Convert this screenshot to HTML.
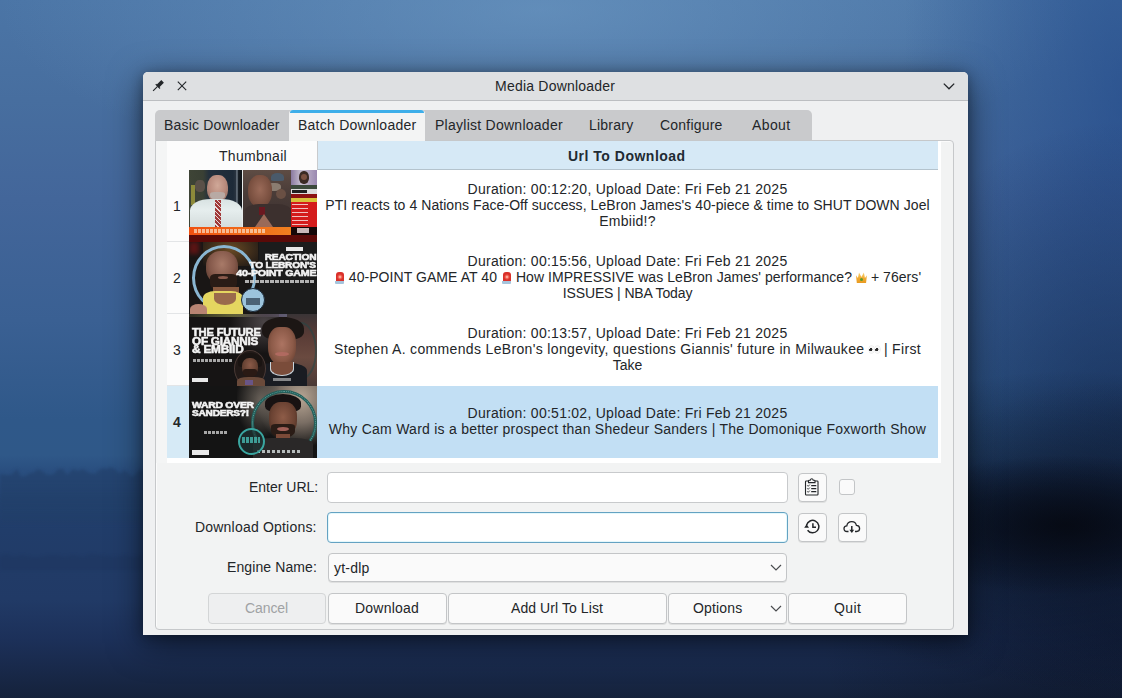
<!DOCTYPE html>
<html><head><meta charset="utf-8">
<style>
*{box-sizing:border-box;margin:0;padding:0}
html,body{width:1122px;height:698px;overflow:hidden}
body{position:relative;font-family:"Liberation Sans",sans-serif;color:#232629;
background:
 radial-gradient(ellipse 190px 70px at 1065px 525px, rgba(5,8,16,0.82), rgba(5,8,16,0) 100%),
 radial-gradient(ellipse 280px 160px at 1070px 530px, rgba(6,10,22,0.65), rgba(6,10,22,0) 100%),
 radial-gradient(ellipse 300px 260px at 1122px 640px, rgba(8,14,30,0.5), rgba(8,14,30,0) 100%),
 radial-gradient(ellipse 260px 300px at 1122px 420px, rgba(14,28,58,0.5), rgba(14,28,58,0) 100%),
 radial-gradient(ellipse 220px 600px at 1122px 100px, rgba(20,60,130,0.5), rgba(20,60,130,0) 100%),
 radial-gradient(ellipse 540px 170px at 540px 10px, rgba(120,165,205,0.5), rgba(120,165,205,0) 100%),
 linear-gradient(180deg,#4b75a6 0px,#476e9f 100px,#43669a 200px,#3a6093 320px,#2f5889 420px,#2f5888 455px,#2a4f80 470px,#23436f 500px,#213d6a 530px,#213b67 570px,#213a66 600px,#1c3059 640px,#15223b 698px);
}
.a{position:absolute}
.t{position:absolute;white-space:nowrap;font-size:14px;line-height:16px;letter-spacing:0.25px}
.c{text-align:center}
#win{position:absolute;left:143px;top:72px;width:825px;height:563px;background:#eff0f1;border-radius:5px 5px 0 0;
 box-shadow:0 8px 34px rgba(0,0,0,0.55),0 2px 12px rgba(0,0,0,0.3)}
#title{position:absolute;left:143px;top:72px;width:825px;height:29px;background:#dee0e2;border-bottom:1px solid #bcbec1;border-radius:5px 5px 0 0}
.tab{position:absolute;top:110px;height:31px;background:#c9cacc}
.pane{position:absolute;left:155px;top:140px;width:799px;height:490px;border:1px solid #c6c8ca;border-radius:0 4px 4px 4px;background:#f2f3f3;box-shadow:inset 1px 1px 0 #fbfbfb}
.cell{position:absolute;background:#fff}
.btn{position:absolute;background:#fafafa;border:1px solid #c3c5c7;border-radius:4px;box-shadow:0 1px 0 rgba(0,0,0,0.08)}
.inp{position:absolute;background:#fff;border:1px solid #c8cacc;border-radius:4px}
.em{display:inline-block;position:relative;width:11px;height:12px;vertical-align:-1px}
.siren::before{content:"";position:absolute;left:2px;top:1px;width:8px;height:9px;background:radial-gradient(circle 3px at 50% 55%,#ffd8cc 0,#f05a4a 60%,#d9302a 100%);border-radius:3px 3px 0 0}
.siren::after{content:"";position:absolute;left:1.5px;top:10px;width:9px;height:2.5px;background:#a6c4dc;border-radius:0 0 1px 1px}
.crown::before{content:"";position:absolute;left:0px;top:1px;width:11px;height:11px;background:linear-gradient(180deg,#f7d77a,#f0a830 60%,#e89a20);clip-path:polygon(0 30%,18% 55%,28% 5%,50% 45%,72% 5%,82% 55%,100% 30%,92% 100%,8% 100%)}
.crown::after{content:"";position:absolute;left:4px;top:7px;width:3px;height:3px;border-radius:50%;background:#5a9a30}
.eyes::before,.eyes::after{content:"";position:absolute;top:3px;width:5px;height:7px;border-radius:50%;background:radial-gradient(circle 1.7px at 38% 55%,#2a2a2a 0,#2a2a2a 90%,#f6f6f6 100%);box-shadow:0 0 0 0.5px #e2e2e2}
.eyes::before{left:0}.eyes::after{left:6px}
.th{position:absolute;width:128px;height:72px;overflow:hidden}
.tx{color:#f4f4f4;font-weight:bold;-webkit-text-stroke:0.55px #f4f4f4;white-space:nowrap;letter-spacing:-0.2px;transform-origin:0 0}
</style></head>
<body>
<svg class="a" style="left:0;top:0;filter:blur(1.5px);-webkit-mask-image:linear-gradient(180deg,#000 0,#000 478px,rgba(0,0,0,0.2) 525px,#000 545px)" width="320" height="698" viewBox="0 0 320 698">
 <path d="M0 525 L0 474 L5 475 L11 475 L17 469 L21 477 L26 476 L30 473 L33 473 L38 469 L42 471 L47 475 L51 475 L54 474 L58 469 L63 469 L67 475 L73 469 L78 471 L83 469 L89 473 L95 474 L99 470 L103 468 L106 469 L111 467 L116 470 L120 474 L124 470 L128 473 L132 477 L135 475 L140 469 L146 472 L150 469 L153 470 L159 471 L165 476 L170 472 L174 473 L180 470 L185 475 L191 469 L196 470 L200 474 L206 472 L212 473 L216 472 L219 470 L223 475 L229 470 L232 477 L237 472 L240 474 L246 473 L250 469 L256 469 L260 476 L264 475 L270 474 L275 470 L279 470 L285 471 L289 477 L295 477 L299 473 L304 473 L308 472 L312 472 L318 477 L320 525 Z" fill="#1e3a62" fill-opacity="0.45"/>
 <path d="M0 570 L0 556 L7 554 L13 557 L22 555 L31 557 L40 557 L49 555 L57 555 L65 557 L73 555 L83 557 L91 554 L98 555 L107 556 L116 557 L125 555 L133 557 L142 555 L151 557 L160 558 L170 556 L177 555 L186 558 L194 557 L202 557 L208 557 L216 557 L223 556 L232 557 L241 554 L247 556 L255 555 L263 557 L268 556 L275 554 L280 555 L286 555 L291 556 L298 556 L306 555 L316 554 L320 570 Z" fill="#1a3359" opacity="0.3"/>
</svg>
<div id="win"></div>
<div id="title"></div>
<!-- title icons -->
<svg class="a" style="left:150px;top:78px" width="16" height="16" viewBox="0 0 16 16">
 <path d="M11.3 2.1 L13.9 4.7 L8.9 9.7 L6.3 7.1 Z" fill="#232629"/>
 <path d="M5.3 6.5 L6.2 5.8 L10.4 10 L9.7 10.9 Z" fill="#232629"/>
 <path d="M7.6 8.4 L3.1 12.9" stroke="#232629" stroke-width="1.2"/>
</svg>
<svg class="a" style="left:176px;top:80px" width="12" height="12" viewBox="0 0 12 12">
 <path d="M1.8 1.7 L10.2 10.1 M10.2 1.7 L1.8 10.1" stroke="#232629" stroke-width="1.1"/>
</svg>
<svg class="a" style="left:942px;top:81px" width="14" height="10" viewBox="0 0 14 10">
 <path d="M1.8 2.6 L7 7.8 L12.2 2.6" stroke="#232629" stroke-width="1.3" fill="none"/>
</svg>
<div class="t" style="left:495px;top:78px;letter-spacing:0.22px">Media Downloader</div>

<!-- tabs -->
<div class="tab" style="left:155px;width:657px;border-radius:5px 5px 0 0"></div>
<div class="pane"></div>
<div class="a" style="left:289px;top:110px;width:136px;height:31px;background:#f3f4f4;border-radius:4px 4px 0 0"></div>
<div class="a" style="left:290px;top:110px;width:134px;height:3px;background:#3daee9;border-radius:3px 3px 0 0"></div>
<div class="t" style="left:164px;top:117px;letter-spacing:0.18px">Basic Downloader</div>
<div class="t" style="left:298px;top:117px;letter-spacing:0.25px">Batch Downloader</div>
<div class="t" style="left:435px;top:117px;letter-spacing:0.26px">Playlist Downloader</div>
<div class="t" style="left:589px;top:117px;letter-spacing:0.23px">Library</div>
<div class="t" style="left:660px;top:117px;letter-spacing:0.21px">Configure</div>
<div class="t" style="left:752px;top:117px;letter-spacing:0.4px">About</div>

<!-- table -->
<div class="a" style="left:156px;top:141px;width:785px;height:322px;background:#fff"></div>
<div class="a" style="left:156px;top:141px;width:11px;height:322px;background:#f4f5f5"></div>
<div class="a" style="left:167px;top:141px;width:150px;height:29px;background:#fcfcfc"></div>
<div class="a" style="left:317px;top:141px;width:621px;height:29px;background:#d6e9f6;border-bottom:1px solid #b4c3cd;border-left:1px solid #c9cbcd"></div>
<div class="a" style="left:167px;top:170px;width:22px;height:288px;background:#fcfcfc"></div>
<div class="a" style="left:167px;top:241px;width:22px;height:1px;background:#e3e5e7"></div>
<div class="a" style="left:167px;top:313px;width:22px;height:1px;background:#e3e5e7"></div>
<div class="a" style="left:167px;top:385px;width:22px;height:1px;background:#e3e5e7"></div>
<div class="a" style="left:167px;top:386px;width:22px;height:72px;background:#d6eaf6"></div>
<div class="a" style="left:317px;top:386px;width:621px;height:72px;background:#c2dff4"></div>
<div class="t" style="left:219px;top:148px;letter-spacing:0.29px">Thumbnail</div>
<div class="t" style="left:568px;top:148px;font-weight:bold;letter-spacing:0.5px;color:#1f2b33">Url To Download</div>
<div class="t" style="left:173px;top:198px">1</div>
<div class="t" style="left:173px;top:270px">2</div>
<div class="t" style="left:173px;top:342px">3</div>
<div class="t" style="left:173px;top:414px;font-weight:bold">4</div>

<!-- row texts -->
<div class="t c" style="left:317px;width:621px;top:181px;letter-spacing:0.26px">Duration: 00:12:20, Upload Date: Fri Feb 21 2025</div>
<div class="t c" style="left:317px;width:621px;top:197px;letter-spacing:0.06px">PTI reacts to 4 Nations Face-Off success, LeBron James's 40-piece &amp; time to SHUT DOWN Joel</div>
<div class="t c" style="left:317px;width:621px;top:213px;letter-spacing:0.25px">Embiid!?</div>

<div class="t c" style="left:317px;width:621px;top:253px;letter-spacing:0.26px">Duration: 00:15:56, Upload Date: Fri Feb 21 2025</div>
<div class="t c" style="left:317px;width:621px;top:269px;letter-spacing:0.06px"><span class="em siren"></span> 40-POINT GAME AT 40 <span class="em siren"></span> How IMPRESSIVE was LeBron James' performance? <span class="em crown"></span> + 76ers'</div>
<div class="t c" style="left:317px;width:621px;top:285px;letter-spacing:-0.12px">ISSUES | NBA Today</div>

<div class="t c" style="left:317px;width:621px;top:325px;letter-spacing:0.26px">Duration: 00:13:57, Upload Date: Fri Feb 21 2025</div>
<div class="t c" style="left:317px;width:621px;top:341px;letter-spacing:0.34px">Stephen A. commends LeBron's longevity, questions Giannis' future in Milwaukee <span class="em eyes"></span> | First</div>
<div class="t c" style="left:317px;width:621px;top:357px;letter-spacing:0px">Take</div>

<div class="t c" style="left:317px;width:621px;top:405px;letter-spacing:0.26px">Duration: 00:51:02, Upload Date: Fri Feb 21 2025</div>
<div class="t c" style="left:317px;width:621px;top:421px;letter-spacing:0.25px">Why Cam Ward is a better prospect than Shedeur Sanders | The Domonique Foxworth Show</div>

<!-- thumbnails -->
<div class="th" style="left:189px;top:170px;background:#5a0a08">
 <div class="a" style="left:0;top:0;width:53px;height:57px;background:linear-gradient(90deg,#3e4436 0,#3a4034 14px,#24303c 20px,#1d2a38 44px,#2a3440 47px,#8c98a4 48px,#182028 49px,#101418 52px)"></div>
 <div class="a" style="left:2px;top:15px;width:4px;height:20px;background:#8c8a3a"></div>
 <div class="a" style="left:6px;top:10px;width:10px;height:12px;background:#5a5048;border-radius:40%"></div>
 <div class="a" style="left:18px;top:5px;width:21px;height:26px;background:radial-gradient(ellipse at 50% 40%,#d0a898 0,#b88a7c 55%,#8a6a60 100%);border-radius:45% 45% 40% 40%"></div>
 <div class="a" style="left:21px;top:22px;width:15px;height:8px;background:#b8aaa4;border-radius:30% 30% 50% 50%"></div>
 <div class="a" style="left:1px;top:29px;width:52px;height:28px;background:linear-gradient(180deg,#d8e2e2,#e6eeee 40%,#d4dcdc);border-radius:40% 40% 0 0"></div>
 <div class="a" style="left:26px;top:30px;width:6px;height:27px;background:repeating-linear-gradient(45deg,#a03838 0 2px,#e8d8d8 2px 3px)"></div>
 <div class="a" style="left:53px;top:0;width:1px;height:57px;background:#e8ecec"></div>
 <div class="a" style="left:54px;top:0;width:48px;height:57px;background:linear-gradient(180deg,#5e4c44,#4a3c38 40%,#3a302e)"></div>
 <div class="a" style="left:82px;top:3px;width:13px;height:8px;background:#4a5a6a;border-radius:50% 50% 20% 20%"></div>
 <div class="a" style="left:78px;top:13px;width:14px;height:8px;background:#8a7c70;border-radius:40%"></div>
 <div class="a" style="left:87px;top:19px;width:10px;height:10px;background:#6a5044;border-radius:50%"></div>
 <div class="a" style="left:59px;top:5px;width:24px;height:32px;background:radial-gradient(ellipse at 50% 45%,#9a6a58 0,#7a5040 60%,#5a3a30 100%);border-radius:45% 45% 45% 45%"></div>
 <div class="a" style="left:56px;top:34px;width:46px;height:23px;background:#3c302e;border-radius:30% 30% 0 0"></div>
 <div class="a" style="left:70px;top:37px;width:6px;height:8px;background:#6a1820"></div>
 <div class="a" style="left:66px;top:44px;width:18px;height:13px;background:#9a6a58;clip-path:polygon(50% 0,100% 100%,0 100%)"></div>
 <div class="a" style="left:102px;top:0;width:26px;height:15px;background:linear-gradient(90deg,#8a7aa0,#c8c0d0 40%,#9a88b0)"></div>
 <div class="a" style="left:110px;top:1px;width:10px;height:13px;background:#3a2a24;border-radius:45%"></div>
 <div class="a" style="left:112px;top:4px;width:6px;height:6px;background:#7a5040;border-radius:50%"></div>
 <div class="a" style="left:102px;top:15px;width:26px;height:4px;background:#3c4a3c"></div>
 <div class="a" style="left:102px;top:19px;width:26px;height:5px;background:#dcdcdc"></div>
 <div class="a" style="left:103px;top:20px;width:15px;height:3px;background:#202020"></div>
 <div class="a" style="left:102px;top:24px;width:26px;height:4px;background:#8c1212"></div>
 <div class="a" style="left:102px;top:28px;width:26px;height:4px;background:#d8c23a"></div>
 <div class="a" style="left:102px;top:32px;width:26px;height:25px;background:#d41c1c"></div>
 <div class="a" style="left:103px;top:34px;width:16px;height:21px;background:repeating-linear-gradient(180deg,#f0c0c0 0 1px,#d41c1c 1px 4px)"></div>
 <div class="a" style="left:0;top:57px;width:102px;height:8px;background:linear-gradient(90deg,#f05010,#f06818 50%,#f08020)"></div>
 <div class="a" style="left:5px;top:59px;width:72px;height:4px;background:repeating-linear-gradient(90deg,#fbe0c8 0 3px,rgba(0,0,0,0) 3px 4px);opacity:.7"></div>
 <div class="a" style="left:102px;top:57px;width:26px;height:8px;background:#140808"></div>
 <div class="a" style="left:108px;top:58px;width:12px;height:5px;background:#c8b8b8"></div>
</div>
<div class="th" style="left:189px;top:242px;background:#191615">
 <div class="a" style="left:0;top:0;width:10px;height:12px;background:#5a1414;filter:blur(2px)"></div>
 <div class="a" style="left:14px;top:0;width:55px;height:24px;background:radial-gradient(ellipse at 50% 30%,#6a4a24,#3a2a1a 60%,rgba(30,22,20,0) 100%)"></div>
 <div class="a" style="left:70px;top:0;width:58px;height:72px;background:#1c1c1c"></div>
 <div class="a" style="left:3px;top:3px;width:64px;height:66px;border:3px solid #8ab6d2;border-radius:50%"></div>
 <div class="a" style="left:17px;top:9px;width:32px;height:33px;background:radial-gradient(ellipse at 50% 40%,#a87a68 0,#84584a 55%,#4a3024 100%);border-radius:45%"></div>
 <div class="a" style="left:21px;top:32px;width:27px;height:18px;background:#2a1c16;border-radius:20% 20% 50% 50%"></div>
 <div class="a" style="left:29px;top:34px;width:10px;height:3px;background:#8a5a4c;border-radius:50%"></div>
 <div class="a" style="left:24px;top:45px;width:26px;height:12px;background:#8a5a40"></div>
 <div class="a" style="left:14px;top:49px;width:40px;height:23px;background:#e4d660;border-radius:30% 30% 0 0"></div>
 <div class="a" style="left:25px;top:51px;width:22px;height:12px;background:#9a6a4c;border-radius:0 0 50% 50%"></div>
 <div class="a" style="left:1px;top:62px;width:17px;height:10px;background:#b88472;border-radius:50% 50% 0 0"></div>
 <div class="a" style="left:52px;top:46px;width:24px;height:24px;background:#9cc4dc;border-radius:50%;border:1px solid #1a2a3a"></div>
 <div class="a" style="left:57px;top:56px;width:14px;height:7px;background:#2a3a4a;opacity:.7"></div>
 <div class="a" style="left:97px;top:5px;width:17px;height:4px;background:#e8e8e8"></div>
 <div class="a tx" style="right:1px;top:11.1px;font-size:9px;line-height:9px;transform:scaleX(1.14);transform-origin:100% 0">REACTION</div>
 <div class="a tx" style="right:1px;top:19.3px;font-size:9px;line-height:9px;transform:scaleX(1.13);transform-origin:100% 0">TO LEBRON'S</div>
 <div class="a tx" style="right:1px;top:26.8px;font-size:9px;line-height:9px;transform:scaleX(1.19);transform-origin:100% 0">40-POINT GAME</div>
 <div class="a" style="left:56px;top:38px;width:70px;height:3px;background:repeating-linear-gradient(90deg,#d8d8d8 0 4px,rgba(0,0,0,0) 4px 5px);opacity:.8"></div>
</div>
<div class="th" style="left:189px;top:314px;background:#161414">
 <div class="a" style="left:0;top:0;width:128px;height:3px;background:linear-gradient(90deg,#2a2a20,#6a6a3a 40%,#5a4a6a 60%,#6a7a7a)"></div>
 <div class="a" style="left:40px;top:0;width:50px;height:40px;background:radial-gradient(ellipse at 70% 20%,#4a4446,rgba(22,20,20,0) 70%)"></div>
 <div class="a" style="left:98px;top:0;width:30px;height:72px;background:linear-gradient(180deg,#3a3436,#5a3c36 30%,#6a4a40 60%,#4a3a36)"></div>
 <div class="a" style="left:96px;top:8px;width:32px;height:58px;border:2px solid rgba(40,70,70,.6);border-radius:50%"></div>
 <div class="a" style="left:73px;top:3px;width:42px;height:23px;background:#1c1614;border-radius:50% 50% 35% 35%"></div>
 <div class="a" style="left:79px;top:13px;width:28px;height:38px;background:radial-gradient(ellipse at 50% 45%,#ac7462 0,#8c5a48 55%,#5a3628 100%);border-radius:40% 40% 45% 45%"></div>
 <div class="a" style="left:86px;top:38px;width:14px;height:4px;background:#b06a60;border-radius:50%"></div>
 <div class="a" style="left:66px;top:49px;width:52px;height:23px;background:#1a1c22;border-radius:35% 35% 0 0"></div>
 <div class="a" style="left:81px;top:48px;width:24px;height:14px;background:#7a4c3a;border-radius:0 0 50% 50%;border:1.5px solid #c8d4dc;border-top:none"></div>
 <div class="a" style="left:84px;top:64px;width:18px;height:3px;background:#d0d0d0;opacity:.6"></div>
 <div class="a" style="left:45px;top:36px;width:32px;height:37px;background:#221a18;border-radius:50%;border:1px solid #4a3a36"></div>
 <div class="a" style="left:49px;top:39px;width:24px;height:14px;background:#1a1412;border-radius:50% 50% 20% 20%"></div>
 <div class="a" style="left:53px;top:44px;width:16px;height:18px;background:radial-gradient(ellipse at 50% 40%,#8a5a48,#5a3a2c 80%);border-radius:45%"></div>
 <div class="a" style="left:54px;top:55px;width:14px;height:8px;background:#2a1a14;border-radius:20% 20% 50% 50%"></div>
 <div class="a" style="left:48px;top:63px;width:28px;height:9px;background:#6a4a3a;border-radius:40% 40% 0 0"></div>
 <div class="a" style="left:56px;top:66px;width:8px;height:5px;background:#6a5aa8;opacity:.7"></div>
 <div class="a tx" style="left:3px;top:12.6px;font-size:10.75px;line-height:10.75px;transform:scaleX(1.04)">THE FUTURE</div>
 <div class="a tx" style="left:3px;top:21.6px;font-size:10.75px;line-height:10.75px;transform:scaleX(1.09)">OF GIANNIS</div>
 <div class="a tx" style="left:3px;top:30.1px;font-size:10.75px;line-height:10.75px;transform:scaleX(1.1)">&amp; EMBIID</div>
 <div class="a" style="left:4px;top:45px;width:40px;height:3px;background:repeating-linear-gradient(90deg,#d8d8d8 0 3px,rgba(0,0,0,0) 3px 4px);opacity:.75"></div>
 <div class="a" style="left:3px;top:64px;width:16px;height:4px;background:#e8e8e8"></div>
</div>
<div class="th" style="left:189px;top:386px;background:#141414">
 <div class="a" style="left:50px;top:0;width:78px;height:72px;background:radial-gradient(ellipse 45px 50px at 62px 12px,#b8a694,#7a6e64 50%,rgba(40,36,34,0) 100%)"></div>
 <div class="a" style="left:48px;top:0;width:40px;height:50px;background:radial-gradient(ellipse at 60% 30%,#6a625a,rgba(20,20,20,0) 75%)"></div>
 <div class="a" style="left:62px;top:4px;width:66px;height:66px;border:3px solid #245e5a;border-radius:50%"></div>
 <div class="a" style="left:63px;top:5px;width:64px;height:64px;border:1px dotted #8ad0c8;border-radius:50%;opacity:.6"></div>
 <div class="a" style="left:76px;top:8px;width:36px;height:18px;background:#181212;border-radius:50% 50% 30% 30%"></div>
 <div class="a" style="left:80px;top:16px;width:28px;height:34px;background:radial-gradient(ellipse at 50% 45%,#8e5c48 0,#6a4232 60%,#3a241c 100%);border-radius:40% 40% 45% 45%"></div>
 <div class="a" style="left:82px;top:38px;width:24px;height:14px;background:#2a1c16;border-radius:20% 20% 50% 50%"></div>
 <div class="a" style="left:88px;top:41px;width:12px;height:4px;background:#a06058;border-radius:50%"></div>
 <div class="a" style="left:87px;top:48px;width:14px;height:8px;background:#7a4a38"></div>
 <div class="a" style="left:64px;top:52px;width:60px;height:20px;background:#2a2828;border-radius:30% 30% 0 0"></div>
 <div class="a" style="left:68px;top:64px;width:44px;height:3px;background:repeating-linear-gradient(90deg,#d8e0e0 0 3px,rgba(0,0,0,0) 3px 5px);opacity:.8"></div>
 <div class="a" style="left:49px;top:42px;width:27px;height:27px;border:2px solid #3aa6a0;border-radius:50%;background:rgba(30,50,50,.7)"></div>
 <div class="a" style="left:53px;top:51px;width:18px;height:6px;background:repeating-linear-gradient(90deg,#44b0a8 0 3px,rgba(0,0,0,0) 3px 4px);opacity:.85"></div>
 <div class="a tx" style="left:3px;top:15.2px;font-size:8.4px;line-height:8.4px;transform:scaleX(1.24)">WARD OVER</div>
 <div class="a tx" style="left:3px;top:22.9px;font-size:8.4px;line-height:8.4px;transform:scaleX(1.21)">SANDERS?!</div>
 <div class="a" style="left:15px;top:45px;width:23px;height:3px;background:repeating-linear-gradient(90deg,#d8d8d8 0 3px,rgba(0,0,0,0) 3px 4px);opacity:.75"></div>
 <div class="a" style="left:3px;top:64px;width:17px;height:5px;background:#e8e8e8"></div>
</div>

<!-- form -->
<div class="t" style="left:249px;top:479px;letter-spacing:0px">Enter URL:</div>
<div class="t" style="left:195px;top:519px;letter-spacing:0.2px">Download Options:</div>
<div class="t" style="left:227px;top:559px;letter-spacing:0.1px">Engine Name:</div>
<div class="inp" style="left:327px;top:472px;width:461px;height:31px"></div>
<div class="inp" style="left:327px;top:512px;width:461px;height:31px;border-color:#64a2c2;box-shadow:inset 0 0 0 1px #e4f8fc"></div>
<div class="btn" style="left:328px;top:553px;width:459px;height:29px"></div>
<div class="t" style="left:334px;top:560px;letter-spacing:0.2px">yt-dlp</div>
<svg class="a" style="left:769px;top:563px" width="14" height="10" viewBox="0 0 14 10">
 <path d="M2 2 L7 7 L12 2" stroke="#4a4c4f" stroke-width="1.2" fill="none"/>
</svg>
<div class="btn" style="left:798px;top:473px;width:29px;height:29px"></div>
<div class="a" style="left:839px;top:479px;width:16px;height:16px;background:#fafafa;border:1px solid #c3c5c7;border-radius:3px"></div>
<div class="btn" style="left:798px;top:513px;width:29px;height:29px"></div>
<div class="btn" style="left:838px;top:513px;width:29px;height:29px"></div>

<svg class="a" style="left:804px;top:478px" width="16" height="18" viewBox="0 0 16 18">
 <path d="M4.5 3 H2.3 Q1.5 3 1.5 3.8 V16.2 Q1.5 17 2.3 17 H13.2 Q14 17 14 16.2 V3.8 Q14 3 13.2 3 H11" fill="none" stroke="#232629" stroke-width="1.1"/>
 <path d="M4.5 4.6 H11 V3 Q11 2.2 10.2 2.2 H9.2 Q8.9 0.8 7.75 0.8 Q6.6 0.8 6.3 2.2 H5.3 Q4.5 2.2 4.5 3 Z" fill="none" stroke="#232629" stroke-width="1.1"/>
 <path d="M3.2 7.3 L4.2 8.3 L5.8 6.6 M3.2 10.3 L4.2 11.3 L5.8 9.6 M3.2 13.3 L4.2 14.3 L5.8 12.6" fill="none" stroke="#232629" stroke-width="0.9"/>
 <path d="M7.2 7.6 H12.3 M7.2 10.6 H12.3 M7.2 13.6 H12.3" stroke="#232629" stroke-width="1.1"/>
</svg>
<svg class="a" style="left:803px;top:519px" width="18" height="16" viewBox="0 0 18 16">
 <path d="M3.6 6.2 A6.2 6.2 0 1 1 4.6 11.2" fill="none" stroke="#232629" stroke-width="1.5"/>
 <path d="M1.2 5.6 L6 5.6 L3.6 9.2 Z" fill="#232629" transform="rotate(180 3.6 7.2)"/>
 <path d="M9.9 4.2 V8.3 H13" fill="none" stroke="#232629" stroke-width="1.5"/>
</svg>
<svg class="a" style="left:843px;top:520px" width="18" height="14" viewBox="0 0 18 14">
 <path d="M5.5 11.5 H4 Q1 11.5 1 8.6 Q1 6 3.8 5.8 Q4.4 1.6 8.8 1.6 Q12.6 1.6 13.4 5.4 Q16.6 5.6 16.6 8.6 Q16.6 11.5 13.6 11.5 H12" fill="none" stroke="#232629" stroke-width="1.3"/>
 <path d="M8.8 6 V11" stroke="#232629" stroke-width="1.5"/>
 <path d="M6.4 9.8 L11.2 9.8 L8.8 13 Z" fill="#232629"/>
</svg>
<!-- buttons -->
<div class="btn" style="left:208px;top:593px;width:118px;height:31px;background:#eeeff0;border-color:#d3d5d6;box-shadow:none"></div>
<div class="btn" style="left:328px;top:593px;width:119px;height:31px"></div>
<div class="btn" style="left:448px;top:593px;width:219px;height:31px"></div>
<div class="btn" style="left:668px;top:593px;width:119px;height:31px"></div>
<div class="btn" style="left:788px;top:593px;width:119px;height:31px"></div>
<div class="t" style="left:245px;top:600px;color:#a0a2a4;letter-spacing:-0.1px">Cancel</div>
<div class="t" style="left:355px;top:600px;letter-spacing:0.23px">Download</div>
<div class="t" style="left:511px;top:600px;letter-spacing:0.08px">Add Url To List</div>
<div class="t" style="left:693px;top:600px;letter-spacing:0.17px">Options</div>
<div class="t" style="left:834px;top:600px;letter-spacing:0.4px">Quit</div>
<svg class="a" style="left:769px;top:604px" width="14" height="10" viewBox="0 0 14 10">
 <path d="M2 2 L7 7 L12 2" stroke="#4a4c4f" stroke-width="1.2" fill="none"/>
</svg>
</body></html>
